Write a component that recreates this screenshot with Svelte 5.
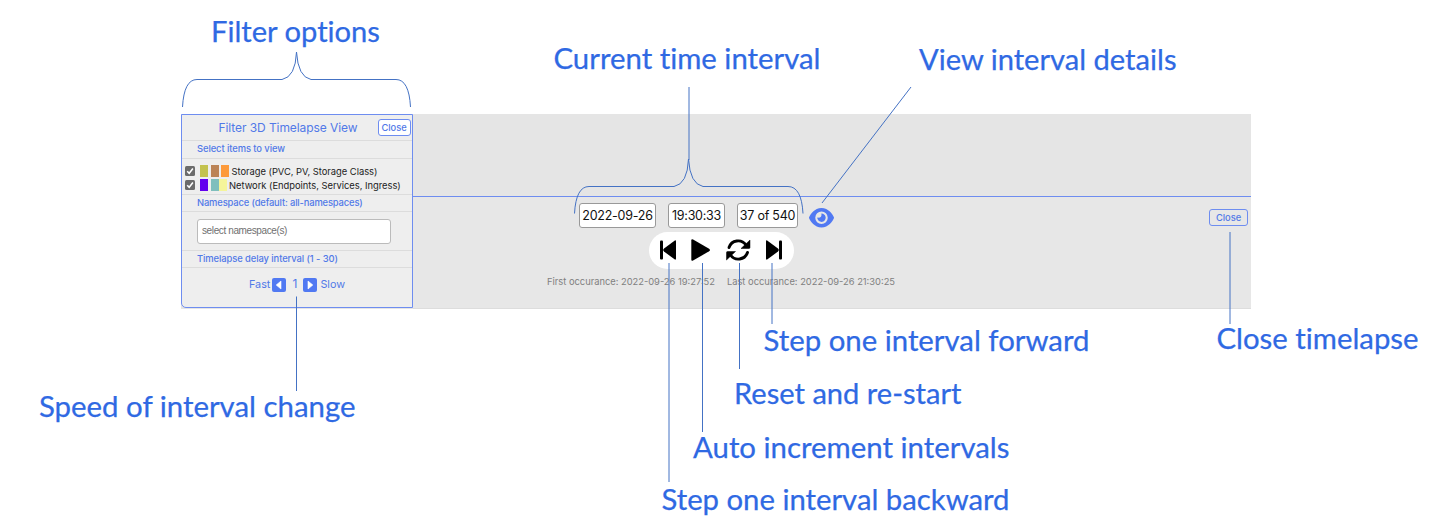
<script>
  const labels = [
    { text: 'Filter options', x: 211, y: 42, w: 169 },
    { text: 'Current time interval', x: 553.5, y: 68.5, w: 267 },
    { text: 'View interval details', x: 919, y: 70, w: 257.5 },
    { text: 'Step one interval forward', x: 763.5, y: 351, w: 326 },
    { text: 'Close timelapse', x: 1216.5, y: 348.5, w: 202 },
    { text: 'Reset and re-start', x: 734, y: 404, w: 227.5 },
    { text: 'Speed of interval change', x: 39, y: 417, w: 316.5 },
    { text: 'Auto increment intervals', x: 693, y: 457.5, w: 316.5 },
    { text: 'Step one interval backward', x: 661.5, y: 510, w: 348 }
  ];
  const lines = [
    [296.5, 296.5, 296.5, 391],
    [689, 87, 689, 160],
    [911, 87, 822, 203],
    [669, 263, 669, 482],
    [702.5, 263, 702.5, 432],
    [739.5, 263, 739.5, 369],
    [772, 263, 772, 324],
    [1230, 232, 1230, 324]
  ];
  const items = [
    { name: 'Storage (PVC, PV, Storage Class)', colors: ['#c3c24e', '#bb8457', '#fd9a3a'], kind: 'storage' },
    { name: 'Network (Endpoints, Services, Ingress)', colors: ['#6200ee', '#7fbfbd', '#f5f59a'], kind: 'network' }
  ];
</script>

<main>
  <div class="app">
    <aside>
      <header><h1>Filter 3D Timelapse View</h1><button class="close white">Close</button></header>
      <div class="row select">Select items to view</div>
      <div class="items">
        {#each items as item}
          <label class={item.kind}>
            <svg class="check" viewBox="0 0 10 10"><rect width="10" height="10" rx="1.5" fill="#6b6b6b" /><path d="M2.2 5.2 4.2 7.3 7.9 2.5" fill="none" stroke="#fff" stroke-width="1.5" /></svg>
            <span class="swatches">{#each item.colors as c}<i style:background={c}></i>{/each}</span>
            <span class="name">{item.name}</span>
          </label>
        {/each}
      </div>
      <div class="row ns">Namespace (default: all-namespaces)</div>
      <div class="field"><div class="input">select namespace(s)</div></div>
      <div class="row delay">Timelapse delay interval (1 - 30)</div>
      <div class="speed">
        <span>Fast</span>
        <svg viewBox="0 0 14 14"><rect width="14" height="14" rx="2" fill="#5179f2" /><path d="M9 3v8L4.200 7z" fill="#fff" stroke="#fff" stroke-width=".6" stroke-linejoin="round" /></svg>
        <span class="num">1</span>
        <svg viewBox="0 0 14 14"><rect width="14" height="14" rx="2" fill="#5179f2" /><path d="M5 3v8L9.800 7z" fill="#fff" stroke="#fff" stroke-width=".6" stroke-linejoin="round" /></svg>
        <span>Slow</span>
      </div>
    </aside>
    <section>
      <div class="scene"></div>
      <div class="bar">
        <div class="values">
          <span class="date">2022-09-26</span><span class="time">19:30:33</span><span class="count">37 of 540</span>
          <svg class="eye" viewBox="0 32 576 448"><path fill="#5179f2" d="M288 32c-80.8 0-145.5 36.8-192.6 80.6C48.6 156 17.3 208 2.5 243.7c-3.3 7.9-3.3 16.7 0 24.6C17.3 304 48.6 356 95.4 399.4C142.5 443.2 207.2 480 288 480s145.5-36.8 192.6-80.6c46.8-43.5 78.1-95.4 93-131.1c3.3-7.9 3.3-16.7 0-24.6c-14.9-35.7-46.2-87.7-93-131.1C433.5 68.8 368.8 32 288 32zM144 256a144 144 0 1 1 288 0 144 144 0 1 1 -288 0zm144-64c0 35.3-28.7 64-64 64c-7.1 0-13.9-1.2-20.3-3.3c-5.5-1.8-11.9 1.6-11.7 7.4c.3 6.9 1.3 13.8 3.2 20.7c13.7 51.2 66.4 81.6 117.6 67.9s81.6-66.4 67.9-117.6c-11.1-41.5-47.8-69.4-88.6-71.1c-5.8-.2-9.2 6.1-7.4 11.7c2.1 6.4 3.3 13.2 3.3 20.3z" /></svg>
        </div>
        <div class="controls">
          <svg width="145" height="37" viewBox="0 0 145 37">
            <g><rect x="11" y="8.500" width="3" height="19" rx="1" /><path d="M27 9.500v17q0 1.800-1.500.8L15 19.500q-1.600-1.500 0-3L25.500 8.700q1.500-1 1.500.8z" /></g>
            <path d="M42.300 8.500q0-1.900 1.800-1l16 9.200q1.800 1.300 0 2.600l-16 9.200q-1.800.9-1.800-1z" />
            <g fill="none" stroke="#000" stroke-width="2.900" stroke-linecap="round"><path d="M80 15.500a9.600 9.600 0 0 1 17-2.500" /><path d="M98.500 20.500a9.600 9.600 0 0 1-17 2.500" /></g>
            <path d="M101 8v7.500q0 1-1 1h-8zM77.500 28v-7.500q0-1 1-1h8z" stroke="#000" stroke-width=".5" stroke-linejoin="round" />
            <g transform="matrix(-1 0 0 1 144 0)"><rect x="11" y="8.500" width="3" height="19" rx="1" /><path d="M27 9.500v17q0 1.800-1.500.8L15 19.500q-1.600-1.500 0-3L25.500 8.700q1.500-1 1.500.8z" /></g>
          </svg>
        </div>
        <div class="range"><span>First occurance: 2022-09-26 19:27:52</span><span>Last occurance: 2022-09-26 21:30:25</span></div>
        <button class="close end">Close</button>
      </div>
    </section>
  </div>

  <svg class="notes" width="1430" height="532" viewBox="0 0 1430 532">
    <g fill="none" stroke="#4472c4" stroke-width="1">
      {#each lines as [x1, y1, x2, y2]}<line {x1} {y1} {x2} {y2} />{/each}
      <path d="M182.500 107Q184 79.500 197 79.500H282Q295.500 77 296.500 52Q298 77 311 79.500H396Q409 79.500 410.500 107" />
      <path d="M574.500 213.500Q576 186.500 589 186.500H674Q687.500 184 688.500 159Q690 184 703 186.500H788Q801.500 186.500 803 213.500" />
    </g>
    <g fill="#2f69e3" stroke="#2f69e3" stroke-width=".25">
      {#each labels as l}<text x={l.x} y={l.y} textLength={l.w} lengthAdjust="spacingAndGlyphs">{l.text}</text>{/each}
    </g>
  </svg>
</main>

<style>
  :global(body) { margin: 0; background: #fff; }
  main { position: relative; width: 1430px; height: 532px; box-sizing: border-box; padding: 114px 0 0 181px; overflow: hidden; font-family: Inter, sans-serif; color: #5179e8; }
  .app { display: flex; width: 1070px; height: 194.500px; background: #e5e5e5; }
  aside { box-sizing: border-box; width: 232px; height: 194px; border: 1px solid #6e8df0; border-bottom-left-radius: 5px; background: #eee; display: flex; flex-direction: column; font-size: 9.400px; }
  header { height: 25px; display: flex; align-items: center; border-bottom: 1px solid #dcdcdc; }
  h1 { margin: 0 0 0 36.500px; width: 159px; font-size: 12px; letter-spacing: -.08px; font-weight: 400; white-space: nowrap; line-height: 25px; }
  .close { box-sizing: border-box; width: 33px; height: 17px; padding: 0; border: 1px solid #6e8df0; border-radius: 3px; background: transparent; color: #5179e8; font: 500 9.300px/15px Inter, sans-serif; }
  .white { background: #fff; margin-top: -1px; }
  .row { box-sizing: border-box; height: 18px; line-height: 16px; padding-left: 15px; border-bottom: 1px solid #dcdcdc; white-space: nowrap; font-weight: 500; letter-spacing: -.08px; }
  .items { height: 35px; box-sizing: border-box; padding: 5px 0 0 3px; }
  label { display: flex; align-items: center; height: 14px; color: #222; white-space: nowrap; letter-spacing: -.03px; }
  .check { flex: none; width: 10px; height: 10px; margin-right: 5px; }
  .swatches { display: flex; }
  i { width: 8px; height: 12px; }
  .storage i { margin-right: 2.500px; }
  .network i:first-child { margin-right: 3px; }
  .network .name { margin-left: 2px; }
  .ns { border-top: 1px solid #dcdcdc; letter-spacing: -.15px; }
  .field { height: 38px; box-sizing: border-box; padding: 7px 0 0 15px; }
  .input { width: 194px; height: 25px; box-sizing: border-box; border: 1px solid #bbb; border-radius: 3px; background: #fff; color: #707070; padding-left: 4px; font: 10px/22px "Liberation Sans", sans-serif; letter-spacing: -.38px; }
  .delay { border-top: 1px solid #dcdcdc; }
  .speed { display: flex; align-items: center; height: 33px; padding-left: 67px; font-size: 10.800px; }
  .speed svg { width: 14px; height: 14px; margin: 0 3px; }
  .speed svg:first-of-type { margin-left: 2px; }
  .num { width: 11px; text-align: center; font-size: 12px; margin-top: -2px; }
  section { flex: 1; display: flex; flex-direction: column; }
  .scene { height: 82px; border-bottom: 1px solid #6e8df0; }
  .bar { flex: 1; display: grid; grid-template-columns: 1fr 42px; grid-template-rows: 35px 37px 1fr; background: #e7e7e7; border-bottom: 1px solid #ddd; }
  .values { display: flex; padding: 6px 0 0 166px; }
  .values span { box-sizing: border-box; height: 25px; border: 1px solid #999; border-radius: 3px; background: #fff; color: #111; font-size: 12.500px; letter-spacing: -.25px; line-height: 24px; text-align: center; white-space: nowrap; }
  .date { width: 77px; margin-right: 12px; }
  .time { width: 57px; margin-right: 12px; }
  .count { width: 61px; margin-right: 11px; }
  .eye { width: 25px; height: 19.500px; margin-top: 5px; }
  .controls { grid-row: 2; grid-column: 1; margin-left: 235.500px; width: 145px; height: 37px; border-radius: 19px; background: #fff; }
  .controls svg { display: block; }
  .range { grid-row: 3; grid-column: 1; display: flex; gap: 12px; padding: 5px 0 0 134px; color: #808080; font-size: 9.340px; line-height: 16px; white-space: nowrap; }
  .end { grid-row: 1; grid-column: 2; width: 39px; margin-top: 12px; }
  .notes { position: absolute; left: 0; top: 0; pointer-events: none; }
  .notes text { font: 400 28.500px Lato, sans-serif; font-variant-ligatures: none; }
</style>
